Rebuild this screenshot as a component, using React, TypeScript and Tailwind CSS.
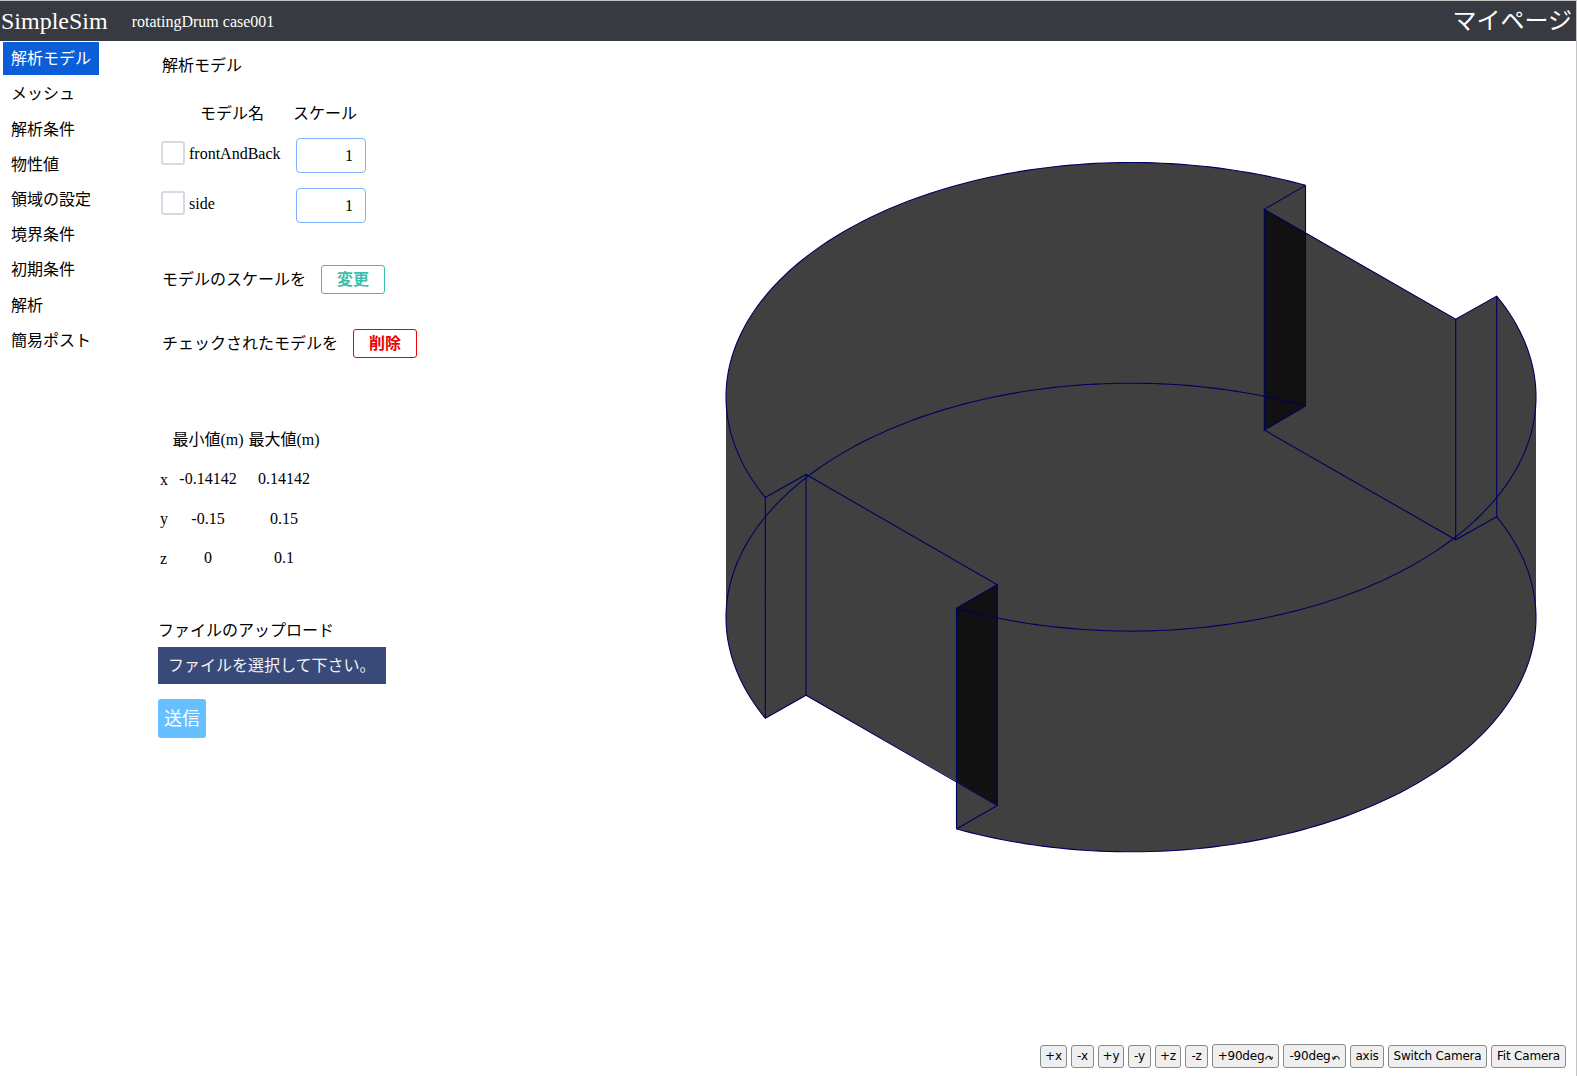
const serif = "font-['Liberation_Serif','Noto_Sans_CJK_JP',serif]";

const navItems = ["解析モデル", "メッシュ", "解析条件", "物性値", "領域の設定", "境界条件", "初期条件", "解析", "簡易ポスト"];

function ScaleRow({ name }: { name: string }) {
  return (
    <div className="flex h-[35px] items-center">
      <span className="h-6 w-6 -translate-y-[3px] rounded-[3px] border-2 border-[#d6dae4] bg-white" />
      <span className="ml-1 w-[107px] -translate-y-0.5">{name}</span>
      <input
        readOnly
        value="1"
        className="h-[35px] w-[70px] rounded border border-[#80b1ff] bg-white px-3 text-right text-base outline-none"
      />
    </div>
  );
}

function ToolButton({ w, tall, children }: { w: string; tall?: boolean; children: React.ReactNode }) {
  return (
    <button className={`flex items-center justify-center rounded-[3px] border border-[#8a8a8a] bg-[#efefef] text-[12px] text-black ${tall ? "h-6" : "h-[23px]"} ${w}`}>
      {children}
    </button>
  );
}

function TurnArrow({ flip }: { flip?: boolean }) {
  return (
    <svg width="8" height="7" viewBox="0 0 8 7" className={`ml-px mt-[3px] ${flip ? "-scale-x-100" : ""}`} fill="none" stroke="#222" strokeWidth="1.1">
      <path d="M0.8 5.5 C0.8 2.2 5 1.2 6.4 4.4" />
      <path d="M4.3 3.8 L6.6 5.4 L7.6 2.8" />
    </svg>
  );
}

const cx = 1131, rx = 405, ry = 234.3, topY = 396.8, botY = 617.5;

// Points along the drum's ellipse between two angles (in degrees, clockwise on screen).
function arc(cy: number, from: number, to: number) {
  const n = 120;
  const pts: string[] = [];
  for (let i = 0; i <= n; i++) {
    const a = ((from + ((to - from) * i) / n) * Math.PI) / 180;
    pts.push(`${(cx + rx * Math.cos(a)).toFixed(2)} ${(cy + ry * Math.sin(a)).toFixed(2)}`);
  }
  return pts.join(" L");
}

const a1 = (-Math.acos((1305.5 - cx) / rx) * 180) / Math.PI; // upper right notch, inner side
const a2 = (-Math.acos((1496.7 - cx) / rx) * 180) / Math.PI; // upper right notch, outer side
const a3 = a2 + 180;
const a4 = a1 + 180;
const y = (a: number, cy: number) => cy + ry * Math.sin((a * Math.PI) / 180);
const x = (a: number) => cx + rx * Math.cos((a * Math.PI) / 180);

function Model() {
  const silhouette =
    `M${arc(topY, -180, a1)} V232.6 L1455.7 ${y(a2, topY) + 23} L${x(a2)} ${y(a2, topY)} L${arc(topY, a2, 0)} ` +
    `L${arc(botY, 0, a4)} V781.3 L806 ${y(a3, botY) - 23} L${x(a3)} ${y(a3, botY)} L${arc(botY, a3, 180)} Z`;

  const rim = (cy: number) =>
    `M${arc(cy, a1, a3 - 360)} L806 ${y(a3, cy) - 23} L997.3 ${y(a4, cy) - 23.5} L${x(a4)} ${y(a4, cy)} ` +
    `L${arc(cy, a4, a2)} L1455.7 ${y(a2, cy) + 23} L1264.3 ${y(a1, cy) + 24} L${x(a1)} ${y(a1, cy)} `;

  return (
    <svg className="absolute inset-0" width="1126" height="1035" viewBox="450 41 1126 1035">
      <path fill="#404040" d={silhouette} />
      <path fill="#111111" d="M1264.3 209.3 L1305.5 232.6 V406 L1264.3 430 Z M956.5 607.7 L997.3 584.3 V805 L956.5 781.3 Z" />
      <path fill="none" stroke="#000060" strokeWidth="1.1" d={rim(topY)} />
      <path fill="none" stroke="#000060" strokeWidth="1.1" d={rim(botY)} />
      <path
        fill="none"
        stroke="#000060"
        strokeWidth="1.1"
        d={`M1264.3 209.3 V430 M1305.5 185.3 V406 M1455.7 319 V539.3 M1496.7 296 V516.7 M765.3 497.5 V717.7 M806 474 V695 M956.5 607.7 V828.7 M997.3 584.3 V805`}
      />
    </svg>
  );
}

export default function App() {
  return (
    <div className={`relative flex h-screen w-full flex-col overflow-hidden border-r border-t border-[#c4c4c4] bg-white text-base text-black ${serif}`}>
      <header className="flex h-10 shrink-0 items-center bg-[#373a40] text-white">
        <span className="ml-px text-2xl leading-none">SimpleSim</span>
        <span className="ml-6 mt-0.5">rotatingDrum case001</span>
        <span className="ml-auto mr-1 text-2xl leading-none">マイページ</span>
      </header>
      <div className="flex flex-1">
        <nav className="ml-[3px] mt-[1px] flex w-[155px] shrink-0 flex-col">
          {navItems.map((item, i) =>
            i === 0 ? (
              <a key={item} className="mb-[1.8px] flex h-[33px] w-[96px] items-center bg-[#0b5ed7] px-2 text-white">
                {item}
              </a>
            ) : (
              <a key={item} className="flex h-[35.2px] items-center px-2">
                {item}
              </a>
            ),
          )}
        </nav>
        <main className="w-[292px] shrink-0">
          <h1 className="ml-1 mt-[13px] leading-6">解析モデル</h1>
          <div className="ml-[42px] mt-6 flex h-6 items-center">
            <span>モデル名</span>
            <span className="ml-[29px]">スケール</span>
          </div>
          <div className="ml-[3px] mt-3 flex flex-col gap-[15px]">
            <ScaleRow name="frontAndBack" />
            <ScaleRow name="side" />
          </div>
          <div className="ml-1 mt-[42px] flex h-[29px] items-center">
            <span>モデルのスケールを</span>
            <button className="ml-[15px] h-[29px] w-16 rounded-[3px] border border-[#3ebfae] bg-white font-bold text-[#3ebfae]">変更</button>
          </div>
          <div className="ml-1 mt-[35px] flex h-[29px] items-center">
            <span>チェックされたモデルを</span>
            <button className="ml-[15px] h-[29px] w-16 rounded-[3px] border border-[#f00000] bg-white font-bold text-[#f00000]">削除</button>
          </div>
          <div className="ml-[2px] mt-[62px] grid grid-cols-[12px_72px_4px_72px] items-center text-center">
            <span className="h-[39.5px] leading-[39.5px]" />
            <span>最小値(m)</span>
            <span />
            <span>最大値(m)</span>
            {[
              ["x", "-0.14142", "0.14142"],
              ["y", "-0.15", "0.15"],
              ["z", "0", "0.1"],
            ].map(([a, min, max]) => (
              <div key={a} className="contents">
                <span className="h-[39.5px] text-left leading-[39.5px]">{a}</span>
                <span>{min}</span>
                <span />
                <span>{max}</span>
              </div>
            ))}
          </div>
          <div className="mt-[41px] leading-6">ファイルのアップロード</div>
          <div className="mt-1 flex h-[37px] w-[228px] items-center bg-[#3a4a78] px-[10px] text-[#f2f2f2]">ファイルを選択して下さい。</div>
          <button className="mt-[15px] h-[39px] w-12 rounded-[3px] bg-[#66bfff] text-lg text-white">送信</button>
        </main>
        <section className="relative flex-1">
          <Model />
          <div className="absolute bottom-2 right-[10px] flex items-center gap-1 font-['DejaVu_Sans',sans-serif] tracking-[-0.2px]">
            <ToolButton w="w-[27px]">+x</ToolButton>
            <ToolButton w="w-[23px]">-x</ToolButton>
            <ToolButton w="w-[26px]">+y</ToolButton>
            <ToolButton w="w-[23px]">-y</ToolButton>
            <ToolButton w="w-[26px]">+z</ToolButton>
            <ToolButton w="w-[23px]">-z</ToolButton>
            <ToolButton w="w-[67px]" tall>+90deg<TurnArrow /></ToolButton>
            <ToolButton w="w-[63px]" tall>-90deg<TurnArrow flip /></ToolButton>
            <ToolButton w="w-[34px]">axis</ToolButton>
            <ToolButton w="w-[99px]">Switch Camera</ToolButton>
            <ToolButton w="w-[75px]">Fit Camera</ToolButton>
          </div>
        </section>
      </div>
    </div>
  );
}
